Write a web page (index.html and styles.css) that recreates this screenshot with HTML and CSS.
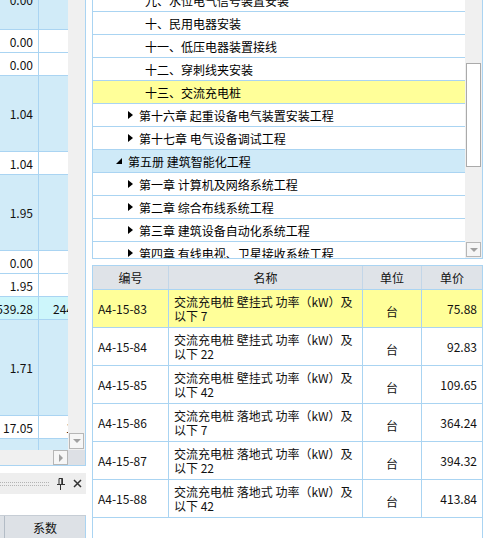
FILE: index.html
```html
<!DOCTYPE html>
<html>
<head>
<meta charset="utf-8">
<title>定额</title>
<link rel="stylesheet" href="styles.css">
</head>
<body>
<div class="app">
  <div class="left">
    <div class="lgrid">
      <div class="lmain">
        <div class="lcells">
          <div class="lrow blue h60 first"><div class="c1">0.00</div><div class="c2"></div></div>
          <div class="lrow h23"><div class="c1">0.00</div><div class="c2"></div></div>
          <div class="lrow h23"><div class="c1">0.00</div><div class="c2"></div></div>
          <div class="lrow blue h76"><div class="c1">1.04</div><div class="c2"></div></div>
          <div class="lrow h23"><div class="c1">1.04</div><div class="c2"></div></div>
          <div class="lrow blue h76"><div class="c1">1.95</div><div class="c2"></div></div>
          <div class="lrow h23"><div class="c1">0.00</div><div class="c2"></div></div>
          <div class="lrow h23"><div class="c1">1.95</div><div class="c2"></div></div>
          <div class="lrow cyan h23"><div class="c1">539.28</div><div class="c2 off14">2445.06</div></div>
          <div class="lrow blue h96"><div class="c1">1.71</div><div class="c2"></div></div>
          <div class="lrow h23"><div class="c1">17.05</div><div class="c2 off27">170.5</div></div>
          <div class="lrow blue h23"><div class="c1"></div><div class="c2"></div></div>
        </div>
        <div class="vscroll">
          <div class="sbtn"><span class="arr-down"></span></div>
        </div>
      </div>
      <div class="hscroll">
        <div class="htrack"><div class="sbtn"><span class="arr-right"></span></div></div>
        <div class="corner"></div>
      </div>
    </div>
    <div class="ltool">
      <div class="grip"></div>
      <svg class="pin" width="8" height="12" viewBox="0 0 8 12">
        <path d="M2 0.5h3.5v6h-3.5z" fill="none" stroke="#333" stroke-width="1"/>
        <path d="M5 0.5v6" stroke="#333" stroke-width="1.5"/>
        <path d="M0 6.5h8" stroke="#333" stroke-width="1"/>
        <path d="M3.5 6.5v5.5" stroke="#333" stroke-width="1"/>
      </svg>
      <svg class="close" width="9" height="9" viewBox="0 0 9 9">
        <path d="M1 1L8 8M8 1L1 8" stroke="#333" stroke-width="1.5"/>
      </svg>
    </div>
    <div class="lhead">
      <div class="lh-stub"></div>
      <div class="lh-col">系数</div>
    </div>
  </div>

  <div class="spacer"></div>

  <div class="right">
    <div class="tree">
      <div class="trows">
        <div class="trow leaf first">九、水位电气信号装置安装</div>
        <div class="trow leaf">十、民用电器安装</div>
        <div class="trow leaf">十一、低压电器装置接线</div>
        <div class="trow leaf">十二、穿刺线夹安装</div>
        <div class="trow leaf sel">十三、交流充电桩</div>
        <div class="trow chap"><span class="tri"></span>第十六章 起重设备电气装置安装工程</div>
        <div class="trow chap"><span class="tri"></span>第十七章 电气设备调试工程</div>
        <div class="trow book hl"><span class="tri-open"></span>第五册 建筑智能化工程</div>
        <div class="trow chap"><span class="tri"></span>第一章 计算机及网络系统工程</div>
        <div class="trow chap"><span class="tri"></span>第二章 综合布线系统工程</div>
        <div class="trow chap"><span class="tri"></span>第三章 建筑设备自动化系统工程</div>
        <div class="trow chap"><span class="tri"></span>第四章 有线电视、卫星接收系统工程</div>
      </div>
      <div class="tscroll">
        <div class="thumb"></div>
        <div class="sbtn tbtn"><span class="arr-down"></span></div>
      </div>
    </div>

    <div class="table">
      <div class="thead">
        <div class="th w-code">编号</div>
        <div class="th w-name">名称</div>
        <div class="th w-unit">单位</div>
        <div class="th w-price last">单价</div>
      </div>
      <div class="tr sel">
        <div class="td w-code code">A4-15-83</div>
        <div class="td w-name name">交流充电桩 壁挂式 功率（kW）及<br>以下 7</div>
        <div class="td w-unit unit">台</div>
        <div class="td w-price price">75.88</div>
      </div>
      <div class="tr">
        <div class="td w-code code">A4-15-84</div>
        <div class="td w-name name">交流充电桩 壁挂式 功率（kW）及<br>以下 22</div>
        <div class="td w-unit unit">台</div>
        <div class="td w-price price">92.83</div>
      </div>
      <div class="tr">
        <div class="td w-code code">A4-15-85</div>
        <div class="td w-name name">交流充电桩 壁挂式 功率（kW）及<br>以下 42</div>
        <div class="td w-unit unit">台</div>
        <div class="td w-price price">109.65</div>
      </div>
      <div class="tr">
        <div class="td w-code code">A4-15-86</div>
        <div class="td w-name name">交流充电桩 落地式 功率（kW）及<br>以下 7</div>
        <div class="td w-unit unit">台</div>
        <div class="td w-price price">364.24</div>
      </div>
      <div class="tr">
        <div class="td w-code code">A4-15-87</div>
        <div class="td w-name name">交流充电桩 落地式 功率（kW）及<br>以下 22</div>
        <div class="td w-unit unit">台</div>
        <div class="td w-price price">394.32</div>
      </div>
      <div class="tr">
        <div class="td w-code code">A4-15-88</div>
        <div class="td w-name name">交流充电桩 落地式 功率（kW）及<br>以下 42</div>
        <div class="td w-unit unit">台</div>
        <div class="td w-price price">413.84</div>
      </div>
    </div>
  </div>
</div>
</body>
</html>
```

FILE: styles.css
```css
* { box-sizing: border-box; }
html, body { margin: 0; padding: 0; }
body {
  width: 489px;
  height: 538px;
  overflow: hidden;
  background: #fff;
  font-family: "Noto Sans CJK SC", "Liberation Sans", sans-serif;
  font-size: 12px;
  color: #000;
}
.app { display: flex; height: 538px; }

/* ---------- left pane ---------- */
.left { width: 86px; flex: none; display: flex; flex-direction: column; }
.lgrid {
  height: 466px;
  border-right: 1px solid #aad4f2;
  border-bottom: 1px solid #aad4f2;
  display: flex;
  flex-direction: column;
}
.lmain { height: 450px; display: flex; }
.lcells { width: 68px; height: 450px; overflow: hidden; }
.lrow { display: flex; border-bottom: 1px solid #aad4f2; }
.lrow.first { margin-top: -30px; }
.h23 { height: 23px; }
.h60 { height: 60px; }
.h76 { height: 76px; }
.h96 { height: 96px; }
.blue { background: #d1ebf8; }
.cyan { background: #cdf6fb; }
.c1 {
  width: 39px;
  border-right: 1px solid #aad4f2;
  display: flex;
  justify-content: flex-end;
  align-items: center;
  padding-right: 5px;
  overflow: hidden;
  white-space: nowrap;
  color: #111;
}
.c2 {
  width: 29px;
  display: flex;
  align-items: center;
  overflow: hidden;
  white-space: nowrap;
  color: #111;
}
.off14 { padding-left: 14px; }
.off27 { padding-left: 27px; }

.vscroll {
  width: 17px;
  background: #f0f0f0;
  display: flex;
  flex-direction: column;
  justify-content: flex-end;
  padding: 0 1px 1px 1px;
}
.sbtn {
  width: 15px;
  height: 16px;
  border: 1px solid #b6b6b6;
  background: #f6f6f6;
  display: flex;
  align-items: center;
  justify-content: center;
  flex: none;
}
.arr-down {
  width: 0; height: 0;
  border-top: 4px solid #a0a0a0;
  border-left: 4px solid transparent;
  border-right: 4px solid transparent;
}
.arr-right {
  width: 0; height: 0;
  border-left: 4px solid #a0a0a0;
  border-top: 4px solid transparent;
  border-bottom: 4px solid transparent;
}
.hscroll { height: 15px; display: flex; }
.htrack {
  width: 68px;
  background: #f0f0f0;
  display: flex;
  justify-content: flex-end;
  align-items: flex-end;
}
.htrack .sbtn { height: 15px; }
.corner { flex: 1; background: #dde0e5; }

.ltool {
  margin-top: 7px;
  height: 21px;
  background: #eeeeee;
  display: flex;
  align-items: center;
  padding-right: 4px;
}
.grip {
  width: 49px;
  height: 4px;
  border-top: 1px dotted #b4b4b4;
  border-bottom: 1px dotted #b4b4b4;
  margin-right: 8px;
}
.pin { flex: none; }
.close { flex: none; margin-left: 8px; }

.lhead {
  margin-top: 21px;
  height: 23px;
  display: flex;
  background: #dde1e6;
  border-top: 1px solid #c6cdd5;
}
.lh-stub { width: 4px; }
.lh-col {
  width: 82px;
  border-left: 1px solid #b3bcc6;
  border-right: 1px solid #aad4f2;
  display: flex;
  align-items: center;
  justify-content: center;
  color: #111;
}

.spacer { width: 6px; flex: none; }

/* ---------- right pane ---------- */
.right {
  width: 397px;
  flex: none;
  padding-right: 6px;
  display: flex;
  flex-direction: column;
}
.tree {
  height: 259px;
  border-left: 1px solid #aad4f2;
  border-right: 1px solid #aad4f2;
  border-bottom: 1px solid #aad4f2;
  display: flex;
}
.trows { flex: 1; overflow: hidden; }
.trow {
  height: 23px;
  border-bottom: 1px solid #aad4f2;
  display: flex;
  align-items: center;
  white-space: nowrap;
}
.trow.first { margin-top: -11px; }
.leaf { padding-left: 52px; }
.chap { padding-left: 35px; }
.book { padding-left: 23px; }
.sel { background: #ffff99; }
.hl { background: #cfeaf8; }
.tri {
  width: 0; height: 0;
  border-left: 5px solid #000;
  border-top: 4px solid transparent;
  border-bottom: 4px solid transparent;
  margin-right: 6px;
}
.tri-open {
  width: 0; height: 0;
  border-left: 6px solid transparent;
  border-bottom: 6px solid #000;
  margin-right: 6px;
  margin-top: -1px;
}
.tscroll {
  width: 17px;
  background: #f0f0f0;
  display: flex;
  flex-direction: column;
  padding: 63px 1px 1px 1px;
}
.thumb {
  height: 104px;
  width: 15px;
  background: #fff;
  border: 1px solid #aaaaaa;
}
.tbtn { margin-top: auto; height: 15px; }

.table {
  margin-top: 6px;
  flex: 1;
  border-left: 1px solid #aad4f2;
  border-right: 1px solid #aad4f2;
  border-top: 1px solid #aad4f2;
}
.thead {
  display: flex;
  height: 24px;
  background: #dfe3e8;
  border-bottom: 1px solid #aad4f2;
}
.th {
  display: flex;
  align-items: center;
  justify-content: center;
  border-right: 1px solid #c3d6e8;
  color: #111;
}
.th.last { border-right: none; }
.w-code { width: 76px; }
.w-name { width: 194px; }
.w-unit { width: 59px; }
.w-price { width: 60px; }
.tr {
  display: flex;
  height: 38px;
  border-bottom: 1px solid #aad4f2;
}
.td {
  display: flex;
  align-items: center;
  border-right: 1px solid #aad4f2;
  white-space: nowrap;
  color: #111;
}
.code { padding-left: 5px; }
.name { padding-left: 5px; line-height: 14px; }
.unit { justify-content: center; padding-top: 5px; }
.price { justify-content: flex-end; padding-right: 5px; border-right: none; }
```
